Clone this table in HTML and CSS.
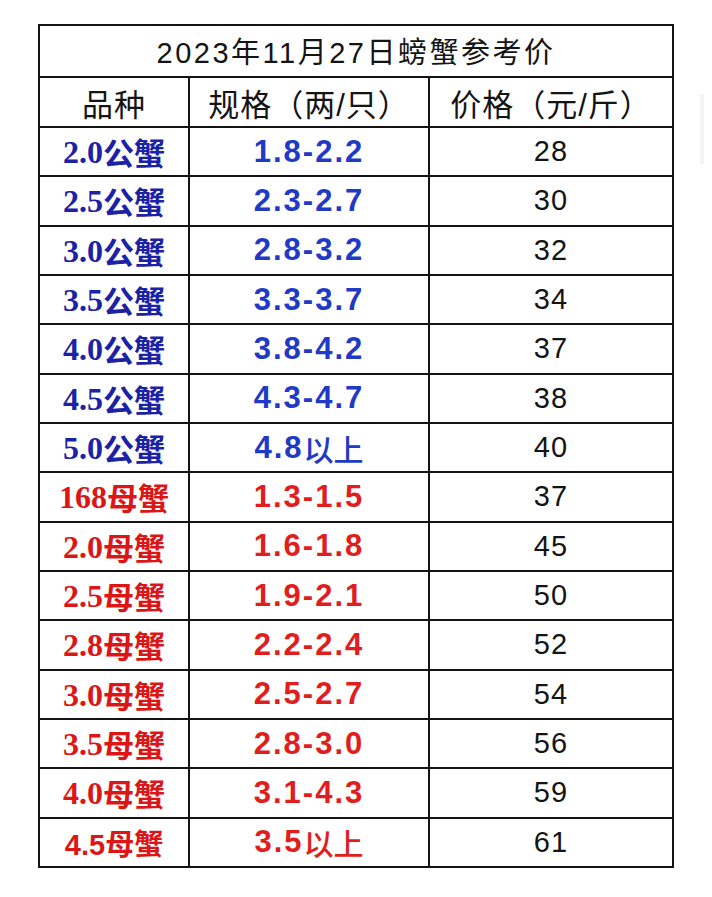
FILE: index.html
```html
<!DOCTYPE html>
<html lang="zh">
<head>
<meta charset="utf-8">
<title>2023年11月27日螃蟹参考价</title>
<link rel="stylesheet" href="styles.css">
</head>
<body>
<div class="sheet">
  <div class="grid">
    <div class="cell title">2023年11月27日螃蟹参考价</div>
    <div class="cell head">品种</div>
    <div class="cell head">规格（两/只）</div>
    <div class="cell head">价格（元/斤）</div>

    <div class="cell kind m"><span><span class="n">2.0</span>公蟹</span></div><div class="cell spec m">1.8-2.2</div><div class="cell price">28</div>
    <div class="cell kind m"><span><span class="n">2.5</span>公蟹</span></div><div class="cell spec m">2.3-2.7</div><div class="cell price">30</div>
    <div class="cell kind m"><span><span class="n">3.0</span>公蟹</span></div><div class="cell spec m">2.8-3.2</div><div class="cell price">32</div>
    <div class="cell kind m"><span><span class="n">3.5</span>公蟹</span></div><div class="cell spec m">3.3-3.7</div><div class="cell price">34</div>
    <div class="cell kind m"><span><span class="n">4.0</span>公蟹</span></div><div class="cell spec m">3.8-4.2</div><div class="cell price">37</div>
    <div class="cell kind m"><span><span class="n">4.5</span>公蟹</span></div><div class="cell spec m">4.3-4.7</div><div class="cell price">38</div>
    <div class="cell kind m"><span><span class="n">5.0</span>公蟹</span></div><div class="cell spec m">4.8<span class="cj">以上</span></div><div class="cell price">40</div>
    <div class="cell kind f"><span><span class="n">168</span>母蟹</span></div><div class="cell spec f">1.3-1.5</div><div class="cell price">37</div>
    <div class="cell kind f"><span><span class="n">2.0</span>母蟹</span></div><div class="cell spec f">1.6-1.8</div><div class="cell price">45</div>
    <div class="cell kind f"><span><span class="n">2.5</span>母蟹</span></div><div class="cell spec f">1.9-2.1</div><div class="cell price">50</div>
    <div class="cell kind f"><span><span class="n">2.8</span>母蟹</span></div><div class="cell spec f">2.2-2.4</div><div class="cell price">52</div>
    <div class="cell kind f"><span><span class="n">3.0</span>母蟹</span></div><div class="cell spec f">2.5-2.7</div><div class="cell price">54</div>
    <div class="cell kind f"><span><span class="n">3.5</span>母蟹</span></div><div class="cell spec f">2.8-3.0</div><div class="cell price">56</div>
    <div class="cell kind f"><span><span class="n">4.0</span>母蟹</span></div><div class="cell spec f">3.1-4.3</div><div class="cell price">59</div>
    <div class="cell kind f sans">4.5母蟹</div><div class="cell spec f">3.5<span class="cj">以上</span></div><div class="cell price">61</div>
  </div>
  <div class="edge"></div>
</div>
</body>
</html>
```

FILE: styles.css
```css
html, body {
  margin: 0;
  padding: 0;
  background: #ffffff;
}
.sheet {
  position: relative;
  width: 712px;
  height: 897px;
  padding: 24px 0 0 38px;
  box-sizing: border-box;
}
.grid {
  display: grid;
  width: 636px;
  box-sizing: border-box;
  grid-template-columns: 148px 238px 242px;
  grid-template-rows: 50px 48px;
  grid-auto-rows: 47.33px;
  gap: 2px;
  padding: 2px;
  background: #141414;
}
.cell {
  background: #ffffff;
  display: flex;
  align-items: center;
  justify-content: center;
  font-family: "Liberation Sans", "Noto Sans CJK SC", sans-serif;
  color: #141414;
  white-space: nowrap;
}
.title {
  grid-column: 1 / 4;
  font-size: 29px;
  letter-spacing: 2.5px;
  padding-bottom: 2px;
}
.head {
  font-size: 31px;
  letter-spacing: 1px;
}
.kind {
  font-family: "Liberation Serif", "Noto Sans CJK SC", serif;
  font-weight: 700;
  font-size: 31px;
}
.kind .n {
  vertical-align: 2px;
  font-size: 32px;
}
.kind.sans {
  font-family: "Liberation Sans", "Noto Sans CJK SC", sans-serif;
  font-size: 29px;
}
.spec {
  font-weight: 700;
  font-size: 31px;
  letter-spacing: 2px;
}
.cj {
  font-weight: 500;
  letter-spacing: 0;
  font-size: 30px;
}
.price {
  font-size: 29px;
  letter-spacing: 1px;
}
.kind.m { color: #1c22a6; }
.spec.m { color: #2039c6; }
.kind.f { color: #dc1616; }
.spec.f { color: #e21d1d; }
.edge {
  position: absolute;
  left: 700px;
  top: 94px;
  width: 4px;
  height: 70px;
  background: #f3f3f3;
}
```
